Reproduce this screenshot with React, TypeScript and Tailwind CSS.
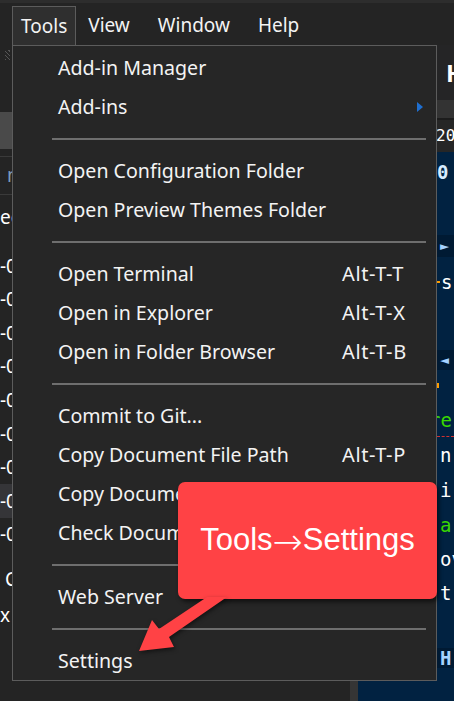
import React from "react";

type Entry =
  | { kind: "item"; label: string; shortcut?: string; sub?: boolean }
  | { kind: "sep" };

const menu: Entry[] = [
  { kind: "item", label: "Add-in Manager" },
  { kind: "item", label: "Add-ins", sub: true },
  { kind: "sep" },
  { kind: "item", label: "Open Configuration Folder" },
  { kind: "item", label: "Open Preview Themes Folder" },
  { kind: "sep" },
  { kind: "item", label: "Open Terminal", shortcut: "Alt-T-T" },
  { kind: "item", label: "Open in Explorer", shortcut: "Alt-T-X" },
  { kind: "item", label: "Open in Folder Browser", shortcut: "Alt-T-B" },
  { kind: "sep" },
  { kind: "item", label: "Commit to Git..." },
  { kind: "item", label: "Copy Document File Path", shortcut: "Alt-T-P" },
  { kind: "item", label: "Copy Document Folder Path" },
  { kind: "item", label: "Check Document Spelling" },
  { kind: "sep" },
  { kind: "item", label: "Web Server" },
  { kind: "sep" },
  { kind: "item", label: "Settings" },
];

const ui = "font-['Noto_Sans',_'Open_Sans',_sans-serif]";
const mono = "font-['DejaVu_Sans_Mono',_'Liberation_Mono',_monospace]";

function MenuBar() {
  return (
    <div className={`h-[42px] flex items-end pl-[12px] text-[19px] text-[#f3f3f3] ${ui}`}>
      <div className="h-[39px] flex items-center px-[8px] bg-[#2f2f2f] border border-b-0 border-[#5c5c5c]">
        Tools
      </div>
      <div className="h-[39px] flex items-center pl-[12px] pr-[13px]">View</div>
      <div className="h-[39px] flex items-center pl-[15px] pr-[14px]">Window</div>
      <div className="h-[39px] flex items-center pl-[14px]">Help</div>
    </div>
  );
}

function LeftPane() {
  const zeros = [0, 1, 2, 3, 4, 5, 6, 7, 8];
  return (
    <div className={`w-[350px] shrink-0 flex flex-col text-[19px] text-white ${ui}`}>
      <div className="h-[5px]" />
      <div className="h-[10px] ml-[5px] w-[5px] bg-[repeating-linear-gradient(45deg,#555_0_1px,transparent_1px_3px)]" />
      <div className="h-[52px]" />
      <div className="h-[37px] bg-[#4a4a4a]" />
      <div className="h-[7px]" />
      <div className="h-[1px] bg-[#3a3a3a]" />
      <div className="h-[37px] flex items-center pl-[7px] text-[#7d9bbd]">n</div>
      <div className="h-[1px] bg-[#3a3a3a]" />
      <div className="h-[44px] flex items-center">ec</div>
      <div className="h-[10px]" />
      {zeros.map((i) => (
        <div
          key={i}
          className={`h-[33.6px] flex items-center ${i === 7 ? "bg-[#353538]" : ""}`}
        >
          -0
        </div>
      ))}
      <div className="h-[10px]" />
      <div className="h-[36px] flex items-center pl-[5px]">C</div>
      <div className="h-[36px] flex items-center gap-[4px]">
        x<span className="w-[2px] h-[3px] bg-[#4fb3e0]" />
      </div>
    </div>
  );
}

function RightPane() {
  return (
    <div className={`flex-1 min-w-0 overflow-hidden flex flex-col ${mono} text-[19px] whitespace-nowrap`}>
      <div className="h-[55px] shrink-0 flex items-center pl-[88px] bg-[#252526]">
        <span className={`text-[24px] font-bold text-white ${ui}`}>H</span>
      </div>
      <div className="h-[18px] shrink-0 bg-[#333333]" />
      <div className="h-[2px] shrink-0 bg-[#1c1c1c]" />
      <div className="h-[32px] shrink-0 flex items-center pl-[78px] bg-[#262626] text-white text-[16px]">
        20
      </div>
      <div className="flex-1 flex flex-col bg-[#012241] text-white">
        <div className="h-[40px] shrink-0 flex items-center pl-[79px] font-bold text-[#d6ecff]">0</div>
        <div className="h-[43px] shrink-0" />
        <div className="h-[22px] shrink-0 flex items-center pl-[82px] bg-[#001a33] text-[#a6d2ff] text-[15px]">
          ►
        </div>
        <div className="h-[50px] shrink-0 flex items-center pl-[79px] gap-[1px]">
          <span className="w-[3px] h-[2px] bg-[#ff9d00]" />s
        </div>
        <div className="h-[43px] shrink-0" />
        <div className="h-[20px] shrink-0 flex items-center pl-[82px] bg-[#001a33] text-[#a6d2ff] text-[15px]">
          ◄
        </div>
        <div className="h-[30px] shrink-0 flex items-center pl-[79px]">
          <span className="w-[2px] h-[5px] bg-[#ff9d00]" />
        </div>
        <div className="h-[36px] shrink-0 flex items-end pl-[71px] pb-[2px] text-[#3ad900]">re</div>
        <div className="h-[0px] shrink-0 ml-[79px] border-t border-dashed border-[#d23030]" />
        <div className="h-[36px] shrink-0 flex items-center pl-[82px]">n</div>
        <div className="h-[35px] shrink-0 flex items-center pl-[82px]">i</div>
        <div className="h-[34px] shrink-0 flex items-center pl-[82px] text-[#3ad900]">a</div>
        <div className="h-[34px] shrink-0 flex items-center pl-[82px]">ov</div>
        <div className="h-[34px] shrink-0 flex items-center pl-[82px]">t</div>
        <div className="h-[38px] shrink-0" />
        <div className="h-[20px] shrink-0 flex items-center pl-[82px] bg-[#001a33] text-[#a6d2ff] font-bold">
          H
        </div>
        <div className="flex-1" />
      </div>
    </div>
  );
}

function Dropdown() {
  return (
    <div
      className={`absolute left-[12px] top-[45px] w-[425px] h-[636px] bg-[#262626] border border-[#5c5c5c] pt-[2px] flex flex-col text-[19.6px] text-[#f3f3f3] ${ui}`}
    >
      {menu.map((e, i) =>
        e.kind === "sep" ? (
          <div key={i} className="h-[25px] flex items-center pl-[39px] pr-[10px]">
            <div className="h-[2px] w-full bg-[#6e6e6e]" />
          </div>
        ) : (
          <div key={i} className="h-[39px] flex items-center pl-[45px]">
            <span className="w-[284px] shrink-0 whitespace-nowrap">{e.label}</span>
            {e.shortcut && (
              <span className="whitespace-nowrap text-[20px] tracking-[0.6px]">{e.shortcut}</span>
            )}
            {e.sub && (
              <span className="ml-[75px] w-0 h-0 border-y-[5.5px] border-y-transparent border-l-[6px] border-l-[#1f6fd0]" />
            )}
          </div>
        )
      )}
    </div>
  );
}

function Callout() {
  return (
    <>
      <div className="absolute left-[178px] top-[482px] w-[259px] h-[117px] rounded-[7px] bg-[#ff4245] shadow-[2px_3px_4px_rgba(0,0,0,0.55)] flex items-center justify-center">
        <span className="flex items-center text-white text-[31px] font-['Liberation_Sans',_Arial,_sans-serif] whitespace-nowrap">
          Tools
          <span className="font-['DejaVu_Sans',_sans-serif] font-light text-[36px] leading-none mt-[2px]">→</span>
          Settings
        </span>
      </div>
      <svg
        className="absolute left-[120px] top-[590px] drop-shadow-[1px_2px_2px_rgba(0,0,0,0.5)]"
        width="120"
        height="70"
        viewBox="120 590 120 70"
      >
        <polygon
          points="207,597 227,597 169,637 174,647 139,651 152,620 159,629"
          fill="#ff4245"
        />
      </svg>
    </>
  );
}

export default function App() {
  return (
    <div className="relative w-[454px] h-[701px] overflow-hidden bg-[#242424] flex flex-col">
      <div className="h-[3px] shrink-0 bg-[#2d2d2d]" />
      <MenuBar />
      <div className="flex-1 flex min-h-0">
        <LeftPane />
        <div className="w-[8px] shrink-0 bg-[#353535]" />
        <RightPane />
      </div>
      <Dropdown />
      <Callout />
    </div>
  );
}
